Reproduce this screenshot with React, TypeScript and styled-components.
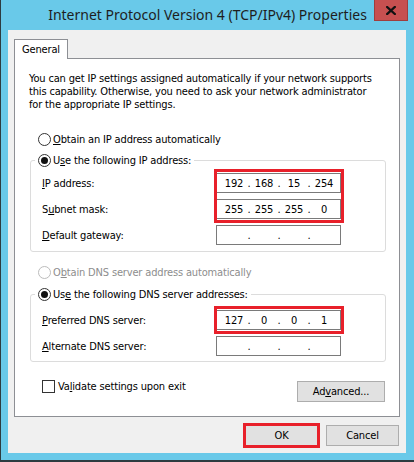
import React, { FC } from 'react'
import styled, { createGlobalStyle } from 'styled-components'

const UI_FONT = '"DejaVu Sans Condensed", "DejaVu Sans", sans-serif'

const GlobalStyle = createGlobalStyle`
  html, body {
    margin: 0;
    padding: 0;
  }
  body {
    background: #69c9e9;
  }
  *, *::before, *::after {
    box-sizing: border-box;
  }
`

const Window = styled.div`
  width: 414px;
  height: 462px;
  display: flex;
  flex-direction: column;
  background: #69c9e9;
  border-left: 1px solid #2d3b40;
  border-bottom: 2px solid #2d3b40;
  font-family: ${UI_FONT};
  font-size: 11px;
  letter-spacing: -0.16px;
  line-height: 13px;
  color: #000;
`

const TitleBar = styled.div`
  flex: none;
  height: 30px;
  display: grid;
  grid-template-columns: 40px 1fr 40px;
`

const Title = styled.h1`
  grid-column: 2;
  margin: 0;
  font-family: "Noto Sans", "Open Sans", sans-serif;
  font-weight: normal;
  font-size: 14px;
  letter-spacing: 0;
  line-height: 30px;
  text-align: center;
  white-space: nowrap;
  color: #1e1e1e;
`

const CloseButton = styled.button`
  width: 34px;
  height: 21px;
  padding: 0;
  display: flex;
  align-items: center;
  justify-content: center;
  background: #c75050;
  border: 1px solid #a03d3d;
  border-top: none;
`

const Client = styled.div`
  flex: 1;
  margin: 0 8px 7px 7px;
  padding: 9px 6px 0;
  background: #f0f0f0;
  display: flex;
  flex-direction: column;
`

const TabStrip = styled.div`
  display: flex;
`

const Tab = styled.div`
  position: relative;
  z-index: 1;
  height: 20px;
  margin-bottom: -1px;
  padding: 3px 7px 0;
  background: #fff;
  border: 1px solid #8d8f94;
  border-bottom: none;
`

const TabPanel = styled.div`
  height: 359px;
  padding: 13px 14px 0;
  background: #fff;
  border: 1px solid #8d8f94;
  display: flex;
  flex-direction: column;
`

const Intro = styled.p`
  margin: 0;
  white-space: nowrap;
`

const Choice = styled.label<{ $disabled?: boolean; $top?: number }>`
  display: flex;
  align-items: center;
  gap: 2px;
  margin: ${p => p.$top ?? 0}px 0 0 9px;
  color: ${p => (p.$disabled ? '#8d8d8d' : '#000')};
  white-space: nowrap;
`

const Radio = styled.span<{ $checked?: boolean; $disabled?: boolean }>`
  width: 13px;
  height: 13px;
  flex: none;
  border-radius: 50%;
  border: 1px solid ${p => (p.$disabled ? '#bcbcbc' : '#333')};
  background: #fff;
  display: flex;
  align-items: center;
  justify-content: center;
  &::after {
    content: '';
    width: 7px;
    height: 7px;
    border-radius: 50%;
    background: #111;
    display: ${p => (p.$checked ? 'block' : 'none')};
  }
`

const Group = styled.fieldset<{ $top: number; $padTop: number }>`
  width: 356px;
  margin: ${p => p.$top}px 0 0 1px;
  padding: ${p => p.$padTop}px 0 0 4px;
  border: 1px solid #dcdcdc;
  border-radius: 3px;
  min-inline-size: 0;
`

const Legend = styled.legend`
  padding: 0 3px;
  & > label {
    margin: 0;
  }
`

const Fields = styled.div<{ $bottom: number }>`
  display: grid;
  grid-template-columns: 174px 125px;
  grid-auto-rows: 20px;
  row-gap: 6px;
  align-items: center;
  margin: 0 0 ${p => p.$bottom}px 7px;
`

const FieldLabel = styled.span<{ $row: number }>`
  grid-column: 1;
  grid-row: ${p => p.$row};
  white-space: nowrap;
`

const IpBox = styled.div<{ $row: number }>`
  grid-column: 2;
  grid-row: ${p => p.$row};
  height: 20px;
  padding-left: 4px;
  display: flex;
  align-items: center;
  background: #fff;
  border: 1px solid #7a7a7a;
`

const Octet = styled.span`
  width: 26px;
  text-align: center;
`

const Dot = styled.span`
  width: 4px;
  text-align: center;
`

// red frame laid over one or more address boxes in the same grid cells
const Highlight = styled.div<{ $row: number; $span: number }>`
  grid-column: 2;
  grid-row: ${p => p.$row} / span ${p => p.$span};
  align-self: stretch;
  margin: -4px -3px -4px -2px;
  border: 3px solid #e8202a;
  pointer-events: none;
  z-index: 1;
`

const Key = styled.span`
  text-decoration: underline;
  text-underline-offset: 1px;
`

const Footer = styled.div`
  margin-top: 18px;
  display: flex;
  justify-content: space-between;
  align-items: flex-start;
`

const Check = styled.label`
  display: flex;
  align-items: center;
  gap: 3px;
  margin-left: 13px;
`

const CheckBox = styled.span`
  width: 13px;
  height: 13px;
  border: 1px solid #333;
  background: #fff;
`

const Button = styled.button<{ $width: number; $marked?: boolean }>`
  width: ${p => p.$width}px;
  height: 21px;
  padding: 0;
  font-family: ${UI_FONT};
  font-size: 11px;
  letter-spacing: -0.16px;
  color: #000;
  background: #e1e1e1;
  border: 1px solid #adadad;
  outline: ${p => (p.$marked ? '3px solid #e8202a' : 'none')};
  outline-offset: -1px;
`

const AdvancedButton = styled(Button)`
  margin-top: 1px;
`

const ButtonRow = styled.div`
  margin-top: 8px;
  padding-right: 1px;
  display: flex;
  justify-content: flex-end;
  gap: 8px;
`

const IpField: FC<{ row: number; value?: string[] }> = ({ row, value = ['', '', '', ''] }) => (
  <IpBox $row={row}>
    <Octet>{value[0]}</Octet>
    <Dot>.</Dot>
    <Octet>{value[1]}</Octet>
    <Dot>.</Dot>
    <Octet>{value[2]}</Octet>
    <Dot>.</Dot>
    <Octet>{value[3]}</Octet>
  </IpBox>
)

const App: FC = () => {
  return (
    <>
      <GlobalStyle />
      <Window>
        <TitleBar>
          <Title>Internet Protocol Version 4 (TCP/IPv4) Properties</Title>
          <CloseButton aria-label="Close">
            <svg width="10" height="9" viewBox="0 0 10 9">
              <path d="M1.2 1 L8.8 8 M8.8 1 L1.2 8" stroke="#111" strokeWidth="2.3" strokeLinecap="square" />
            </svg>
          </CloseButton>
        </TitleBar>
        <Client>
          <TabStrip>
            <Tab>General</Tab>
          </TabStrip>
          <TabPanel>
            <Intro>
              You can get IP settings assigned automatically if your network supports
              <br />
              this capability. Otherwise, you need to ask your network administrator
              <br />
              for the appropriate IP settings.
            </Intro>

            <Choice $top={22}>
              <Radio />
              <span><Key>O</Key>btain an IP address automatically</span>
            </Choice>

            <Group $top={8} $padTop={6}>
              <Legend>
                <Choice>
                  <Radio $checked />
                  <span>U<Key>s</Key>e the following IP address:</span>
                </Choice>
              </Legend>
              <Fields $bottom={6}>
                <FieldLabel $row={1}><Key>I</Key>P address:</FieldLabel>
                <IpField row={1} value={['192', '168', '15', '254']} />
                <FieldLabel $row={2}>S<Key>u</Key>bnet mask:</FieldLabel>
                <IpField row={2} value={['255', '255', '255', '0']} />
                <FieldLabel $row={3}><Key>D</Key>efault gateway:</FieldLabel>
                <IpField row={3} />
                <Highlight $row={1} $span={2} />
              </Fields>
            </Group>

            <Choice $top={14} $disabled>
              <Radio $disabled />
              <span>O<Key>b</Key>tain DNS server address automatically</span>
            </Choice>

            <Group $top={9} $padTop={9}>
              <Legend>
                <Choice>
                  <Radio $checked />
                  <span>Us<Key>e</Key> the following DNS server addresses:</span>
                </Choice>
              </Legend>
              <Fields $bottom={5}>
                <FieldLabel $row={1}><Key>P</Key>referred DNS server:</FieldLabel>
                <IpField row={1} value={['127', '0', '0', '1']} />
                <FieldLabel $row={2}><Key>A</Key>lternate DNS server:</FieldLabel>
                <IpField row={2} />
                <Highlight $row={1} $span={1} />
              </Fields>
            </Group>

            <Footer>
              <Check>
                <CheckBox />
                <span>Va<Key>l</Key>idate settings upon exit</span>
              </Check>
              <AdvancedButton $width={88}>Ad<Key>v</Key>anced...</AdvancedButton>
            </Footer>
          </TabPanel>
          <ButtonRow>
            <Button $width={73} $marked>OK</Button>
            <Button $width={73}>Cancel</Button>
          </ButtonRow>
        </Client>
      </Window>
    </>
  )
}

export default App
